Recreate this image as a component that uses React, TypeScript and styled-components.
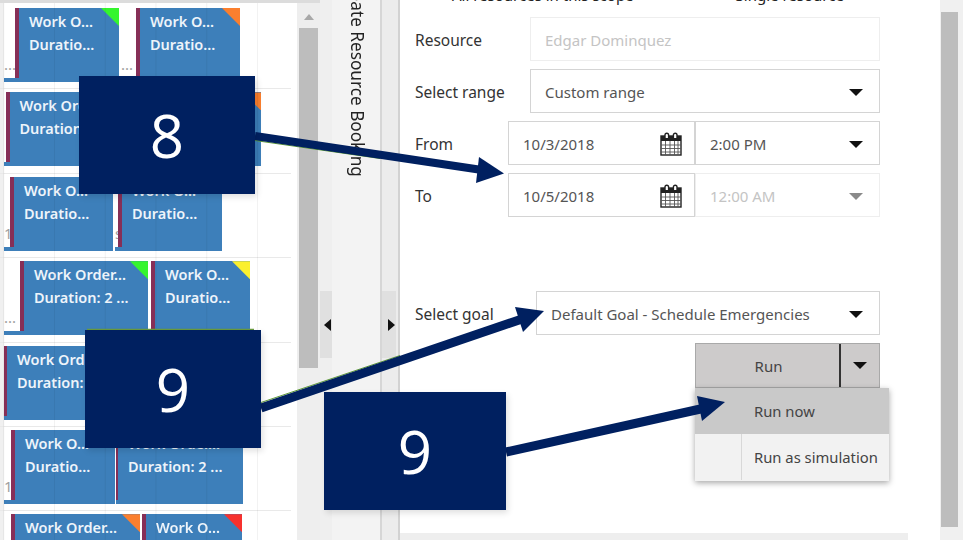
import styled, { createGlobalStyle } from "styled-components";

const GlobalStyle = createGlobalStyle`
  html, body {
    margin: 0;
    padding: 0;
    background: #fff;
    overflow: hidden;
  }
  * {
    box-sizing: border-box;
  }
`;

const Page = styled.div`
  position: relative;
  width: 963px;
  height: 540px;
  overflow: hidden;
  display: flex;
  font-family: "Noto Sans", "Open Sans", sans-serif;
  font-size: 15px;
  color: #333;
  background: #fff;
`;

const Blurred = styled.div`
  display: flex;
  width: 100%;
  height: 100%;
  filter: blur(0.35px);
`;

const Board = styled.div`
  position: relative;
  width: 297px;
  height: 100%;
  flex: none;
  padding-top: 5px;
  background: #fff;
  &::before {
    content: "";
    position: absolute;
    left: 0;
    right: -23px;
    top: 0;
    height: 3px;
    background: #dcdcdc;
    z-index: 1;
  }
  &::after {
    content: "";
    position: absolute;
    left: 0;
    top: 3px;
    bottom: 0;
    width: 291px;
    background-size: 50.75px 100%;
    background-position: 3.25px 0;
    background-image: linear-gradient(
      to right,
      rgba(0, 0, 0, 0.05) 1px,
      transparent 1px
    );
    pointer-events: none;
  }
`;

const BoardEdge = styled.div`
  position: absolute;
  left: 0;
  top: 3px;
  bottom: 0;
  width: 4px;
  background: #f0f0f0;
`;

const Row = styled.div`
  position: relative;
  height: 84.4px;
  width: 291px;
  border-bottom: 1.5px solid #e9e9e9;
`;

const Booking = styled.div<{ $left: number; $width: number }>`
  position: absolute;
  top: 3px;
  left: ${({ $left }) => $left}px;
  width: ${({ $width }) => $width}px;
  height: 74px;
  display: flex;
`;

const Travel = styled.div<{ $width: number }>`
  width: ${({ $width }) => $width}px;
  flex: none;
  display: flex;
  flex-direction: column;
  justify-content: flex-end;
  overflow: hidden;
`;

const TravelLabel = styled.span`
  color: #a0a0a0;
  font-size: 15px;
  line-height: 20px;
  margin-bottom: 4px;
  white-space: nowrap;
`;

const TravelStrip = styled.div`
  height: 4px;
  background: #3d7fba;
`;

const Stripe = styled.div<{ $width: number }>`
  width: ${({ $width }) => $width}px;
  flex: none;
  background: #862f57;
  border-bottom: 4px solid #3d7fba;
`;

const Body = styled.div<{ $corner?: string }>`
  position: relative;
  flex: 1;
  min-width: 0;
  padding: 2px 0 0 10px;
  background: #3d7fba;
  color: #eef4fa;
  font-size: 14.5px;
  font-weight: 600;
  line-height: 23px;
  white-space: nowrap;
  overflow: hidden;
  &::after {
    content: "";
    display: ${({ $corner }) => ($corner ? "block" : "none")};
    position: absolute;
    top: 0;
    right: 0;
    width: 18px;
    height: 18px;
    background: ${({ $corner }) => $corner};
    clip-path: polygon(0 0, 100% 0, 100% 100%);
  }
`;

const BoardScroll = styled.div`
  position: relative;
  width: 23px;
  height: 100%;
  flex: none;
  background: #eeeeee;
  padding: 14px 2px 0;
`;

const ScrollUp = styled.div`
  width: 0;
  height: 0;
  margin: 0 auto;
  border-left: 5px solid transparent;
  border-right: 5px solid transparent;
  border-bottom: 6px solid #a8a8a8;
`;

const ScrollThumb = styled.div`
  width: 19px;
  height: 340px;
  margin-top: 8px;
  background: #bdbdbd;
`;

const SidePane = styled.div`
  position: relative;
  width: 62px;
  height: 100%;
  flex: none;
  display: flex;
  background: #f3f3f3;
  border-right: 2px solid #d6d6d6;
`;

const CollapseGrip = styled.div`
  width: 12px;
  height: 100%;
  flex: none;
  display: flex;
  padding-top: 291px;
  background: #efefef;
`;

const GripHandle = styled.div<{ $width: number }>`
  width: ${({ $width }) => $width}px;
  height: 67px;
  display: flex;
  align-items: center;
  justify-content: flex-end;
  padding: 0 1px 0 0;
  background: #e0e0e0;
`;

const GripArrow = styled.div<{ $dir: "left" | "right" }>`
  width: 0;
  height: 0;
  border-top: 6px solid transparent;
  border-bottom: 6px solid transparent;
  ${({ $dir }) =>
    $dir === "left"
      ? "border-right: 7px solid #111;"
      : "border-left: 7px solid #111;"}
`;

const VerticalTitle = styled.div`
  writing-mode: vertical-rl;
  margin-top: -26px;
  margin-left: 14px;
  height: 230px;
  font-size: 17.2px;
  line-height: 22px;
  color: #222;
  white-space: nowrap;
`;

const SplitRail = styled.div`
  width: 18px;
  height: 100%;
  flex: none;
  display: flex;
  padding-top: 291px;
  background: #ececec;
  border-right: 2px solid #d2d2d2;
`;

const FormPane = styled.div`
  position: relative;
  width: 540px;
  height: 100%;
  flex: none;
  padding-left: 15px;
  background: #fff;
`;

const RadioRow = styled.div`
  height: 17px;
  overflow: hidden;
  display: flex;
  font-size: 15px;
  line-height: 20px;
  color: #222;
`;

const RadioLabel = styled.span<{ $left: number }>`
  margin-left: ${({ $left }) => $left}px;
  margin-top: -15px;
  white-space: nowrap;
`;

const FieldRow = styled.div<{ $top?: number }>`
  display: flex;
  align-items: flex-start;
  width: 465px;
  height: 44px;
  margin-top: ${({ $top }) => $top ?? 8}px;
`;

const FieldLabel = styled.div<{ $width: number }>`
  width: ${({ $width }) => $width}px;
  flex: none;
  font-size: 15.5px;
  line-height: 20px;
  padding-top: 13px;
  color: #333;
  white-space: nowrap;
`;

const Control = styled.div<{ $disabled?: boolean; $width?: number }>`
  display: flex;
  align-items: center;
  justify-content: space-between;
  flex: ${({ $width }) => ($width ? "none" : "1")};
  width: ${({ $width }) => ($width ? `${$width}px` : "auto")};
  height: 44px;
  padding: 2px 16px 0 14px;
  border: 1.5px solid ${({ $disabled }) => ($disabled ? "#eeeeee" : "#d4d4d4")};
  color: ${({ $disabled }) => ($disabled ? "#c4c4c4" : "#555")};
  font-size: 15px;
  white-space: nowrap;
  background: #fff;
`;

const Caret = styled.div<{ $muted?: boolean }>`
  width: 0;
  height: 0;
  flex: none;
  border-left: 7px solid transparent;
  border-right: 7px solid transparent;
  border-top: 7px solid ${({ $muted }) => ($muted ? "#8a8a8a" : "#111")};
`;

const DatePicker = styled(Control)`
  padding-right: 12px;
`;

const CalendarIcon = styled.svg`
  width: 22px;
  height: 24px;
  flex: none;
`;

const RunArea = styled.div`
  position: relative;
  width: 185px;
  margin: 8px 0 0 280px;
`;

const RunSplit = styled.div`
  display: flex;
  height: 45px;
  background: #cdcbcb;
  border: 1.5px solid #a9a9a9;
`;

const RunButton = styled.div`
  flex: 1;
  display: flex;
  align-items: center;
  justify-content: center;
  border-right: 2px solid #333;
  padding-left: 2px;
  color: #444;
`;

const RunCaret = styled.div`
  width: 38px;
  display: flex;
  align-items: center;
  justify-content: center;
`;

const RunMenu = styled.div`
  position: absolute;
  top: 45px;
  left: 0;
  width: 194px;
  height: 93px;
  background: #f2f2f2;
  box-shadow: 0 2px 6px rgba(0, 0, 0, 0.35);
`;

const MenuItem = styled.div<{ $active?: boolean }>`
  display: flex;
  height: 46px;
  align-items: center;
  background: ${({ $active }) => ($active ? "#c9c9c9" : "#f2f2f2")};
  color: #444;
`;

const MenuGutter = styled.div<{ $active?: boolean }>`
  width: 47px;
  height: 100%;
  flex: none;
  border-right: 1px solid ${({ $active }) => ($active ? "#c9c9c9" : "#d8d8d8")};
`;

const MenuText = styled.span`
  padding-left: 12px;
  font-size: 14.8px;
  white-space: nowrap;
`;

const BottomBar = styled.div`
  position: absolute;
  left: 0;
  bottom: 0;
  width: 508px;
  height: 7px;
  background: #eeeeee;
`;

const PageScroll = styled.div`
  width: 23px;
  height: 100%;
  flex: none;
  padding: 12px 5px 0 1px;
  background: #f0f0f0;
`;

const PageThumb = styled.div`
  width: 17px;
  height: 515px;
  background: #bdbdbd;
`;

const Arrows = styled.svg`
  position: absolute;
  inset: 0;
  width: 963px;
  height: 540px;
`;

const Callout = styled.div<{ $left: number; $top: number; $width: number }>`
  position: absolute;
  left: ${({ $left }) => $left}px;
  top: ${({ $top }) => $top}px;
  width: ${({ $width }) => $width}px;
  height: 118px;
  display: flex;
  align-items: center;
  justify-content: center;
  background: #002060;
  color: #fff;
  font-family: "Open Sans", "Noto Sans", sans-serif;
  font-size: 60px;
  box-shadow: 2px 3px 6px rgba(0, 0, 0, 0.12);
`;

type Item = {
  left: number;
  travel: number;
  stripe?: number;
  end: number;
  title: string;
  detail: string;
  label?: string;
  corner?: string;
};

const GREEN = "#35f52e";
const ORANGE = "#fb7f2e";
const YELLOW = "#fbf02e";
const RED = "#f7312e";

const rows: Item[][] = [
  [
    { left: 4, travel: 11, end: 119, title: "Work O...", detail: "Duratio...", label: "...", corner: GREEN },
    { left: 121, travel: 15, end: 240, title: "Work O...", detail: "Duratio...", label: "...", corner: ORANGE },
  ],
  [{ left: 4, travel: 1.5, end: 261, title: "Work Order...", detail: "Duration: 2 ...", corner: ORANGE }],
  [
    { left: 4, travel: 6, end: 113, title: "Work O...", detail: "Duratio...", label: "1" },
    { left: 115, travel: 3, end: 222, title: "Work O...", detail: "Duratio...", label: "s" },
  ],
  [
    { left: 4, travel: 16, end: 148, title: "Work Order...", detail: "Duration: 2 ...", label: "...", corner: GREEN },
    { left: 150, travel: 1, end: 250, title: "Work O...", detail: "Duratio...", corner: YELLOW },
  ],
  [{ left: 4, travel: 0, stripe: 3, end: 240, title: "Work Order...", detail: "Duration: 2 ..." }],
  [
    { left: 4, travel: 7, end: 115, title: "Work O...", detail: "Duratio...", label: "1" },
    { left: 116, travel: 0, stripe: 2, end: 243, title: "Work Order...", detail: "Duration: 2 ..." },
  ],
  [
    { left: 4, travel: 7, end: 140, title: "Work Order...", detail: "Duration: 2 ...", corner: ORANGE },
    { left: 142, travel: 0, end: 242, title: "Work O...", detail: "Duratio...", corner: RED },
  ],
];

function Calendar() {
  return (
    <CalendarIcon viewBox="0 0 22 24">
      <rect x="1" y="4" width="20" height="19" fill="#fff" stroke="#222" strokeWidth="1.4" />
      <rect x="1" y="4" width="20" height="5" fill="#222" />
      <path d="M1 13h20M1 16.500h20M1 20h20M5.500 9v14M10 9v14M14.500 9v14M18 9v14" stroke="#555" strokeWidth="0.9" fill="none" />
      <path d="M5 6V3a1.800 1.800 0 0 1 3.600 0v3M13.400 6V3a1.800 1.800 0 0 1 3.600 0v3" stroke="#222" strokeWidth="1.4" fill="#fff" />
    </CalendarIcon>
  );
}

export default function App() {
  return (
    <Page>
      <GlobalStyle />
      <Blurred>
        <Board>
          <BoardEdge />
          {rows.map((row, i) => (
            <Row key={i}>
              {row.map((b, j) => (
                <Booking key={j} $left={b.left} $width={b.end - b.left}>
                  {b.travel > 0 && (
                    <Travel $width={b.travel}>
                      {b.label && <TravelLabel>{b.label}</TravelLabel>}
                      <TravelStrip />
                    </Travel>
                  )}
                  <Stripe $width={b.stripe ?? 4} />
                  <Body $corner={b.corner}>
                    {b.title}
                    <br />
                    {b.detail}
                  </Body>
                </Booking>
              ))}
            </Row>
          ))}
        </Board>
        <BoardScroll>
          <ScrollUp />
          <ScrollThumb />
        </BoardScroll>
        <SidePane>
          <CollapseGrip>
            <GripHandle $width={12}>
              <GripArrow $dir="left" />
            </GripHandle>
          </CollapseGrip>
          <VerticalTitle>Create Resource Booking</VerticalTitle>
        </SidePane>
        <SplitRail>
          <GripHandle $width={14}>
            <GripArrow $dir="right" />
          </GripHandle>
        </SplitRail>
        <FormPane>
          <RadioRow>
            <RadioLabel $left={37}>All resources in this scope</RadioLabel>
            <RadioLabel $left={102}>Single resource</RadioLabel>
          </RadioRow>
          <FieldRow $top={0}>
            <FieldLabel $width={115}>Resource</FieldLabel>
            <Control $disabled>Edgar Dominquez</Control>
          </FieldRow>
          <FieldRow>
            <FieldLabel $width={115}>Select range</FieldLabel>
            <Control>
              Custom range
              <Caret />
            </Control>
          </FieldRow>
          <FieldRow>
            <FieldLabel $width={93}>From</FieldLabel>
            <DatePicker $width={187}>
              10/3/2018
              <Calendar />
            </DatePicker>
            <Control>
              2:00 PM
              <Caret />
            </Control>
          </FieldRow>
          <FieldRow>
            <FieldLabel $width={93}>To</FieldLabel>
            <DatePicker $width={187}>
              10/5/2018
              <Calendar />
            </DatePicker>
            <Control $disabled>
              12:00 AM
              <Caret $muted />
            </Control>
          </FieldRow>
          <FieldRow $top={74}>
            <FieldLabel $width={121}>Select goal</FieldLabel>
            <Control>
              Default Goal - Schedule Emergencies
              <Caret />
            </Control>
          </FieldRow>
          <RunArea>
            <RunSplit>
              <RunButton>Run</RunButton>
              <RunCaret>
                <Caret />
              </RunCaret>
            </RunSplit>
            <RunMenu>
              <MenuItem $active>
                <MenuGutter $active />
                <MenuText>Run now</MenuText>
              </MenuItem>
              <MenuItem>
                <MenuGutter />
                <MenuText>Run as simulation</MenuText>
              </MenuItem>
            </RunMenu>
          </RunArea>
          <BottomBar />
        </FormPane>
        <PageScroll>
          <PageThumb />
        </PageScroll>
      </Blurred>
      <Arrows viewBox="0 0 963 540">
        <path d="M255 140.500 L380 158.500" stroke="#5c9a34" strokeWidth="1" fill="none" />
        <path d="M255 136 L482 170" stroke="#002060" strokeWidth="8" fill="none" />
        <polygon points="504,173.500 479,157 476,183" fill="#002060" />
        <path d="M87 329.500 H254" stroke="#6a9c3e" strokeWidth="1.500" fill="none" />
        <path d="M261 402.500 L400 355.500" stroke="#5c9a34" strokeWidth="1" fill="none" />
        <path d="M261 408 L525 318" stroke="#002060" strokeWidth="9" fill="none" />
        <polygon points="544,311 515,307 523,332" fill="#002060" />
        <path d="M506 452 L705 408" stroke="#002060" strokeWidth="9" fill="none" />
        <polygon points="725,402 697,396 702,421" fill="#002060" />
      </Arrows>
      <Callout $left={79} $top={76} $width={176}>8</Callout>
      <Callout $left={85} $top={330} $width={176}>9</Callout>
      <Callout $left={324} $top={392} $width={182}>9</Callout>
    </Page>
  );
}
